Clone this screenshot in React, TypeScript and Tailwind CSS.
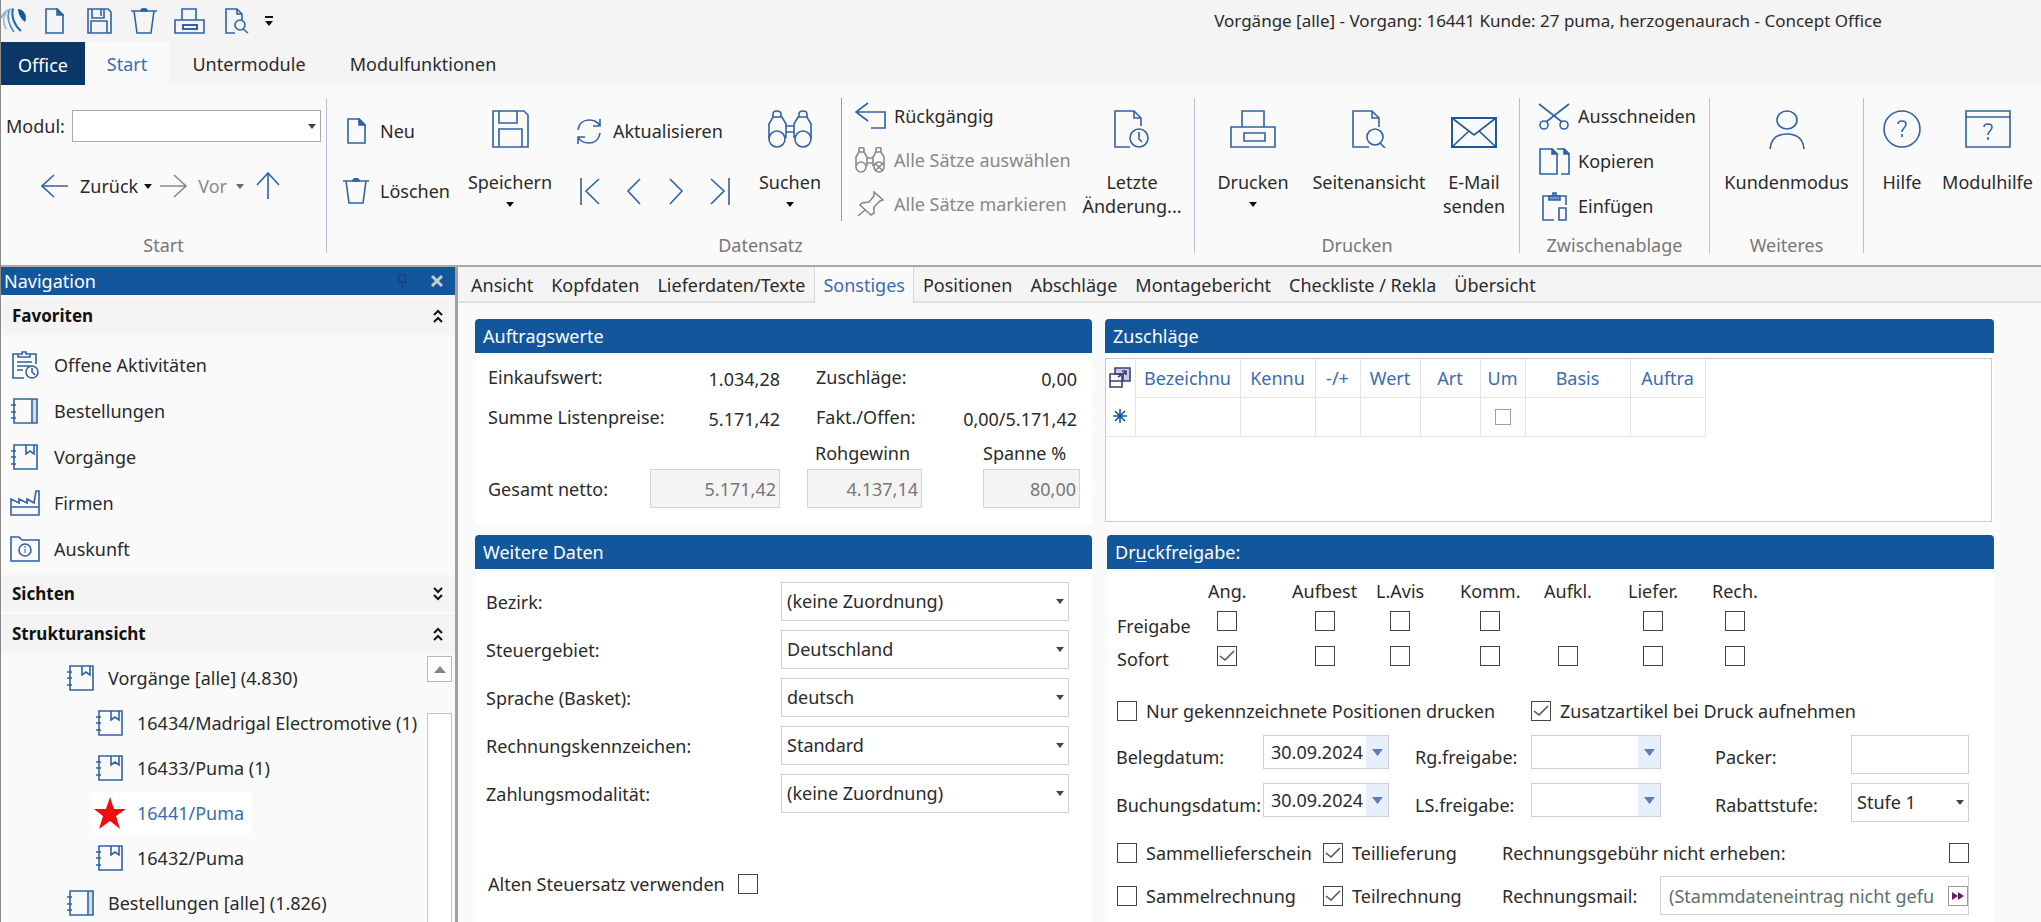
import type { ReactNode, SVGProps } from "react";

const BLUE = "#2f63a3";
const GRAY = "#8a8a8a";

type IconProps = { w: number; h: number; color?: string; children: ReactNode } & SVGProps<SVGSVGElement>;

const Icon = ({ w, h, color = BLUE, children, ...rest }: IconProps) => (
  <svg
    width={w}
    height={h}
    viewBox={`0 0 ${w} ${h}`}
    fill="none"
    stroke={color}
    strokeWidth={1.6}
    className="shrink-0"
    aria-hidden="true"
    {...rest}
  >
    {children}
  </svg>
);

/* ---------- icons ---------- */

const LogoIcon = () => (
  <svg width="27" height="28" viewBox="0 0 27 28" fill="none" className="shrink-0" aria-hidden="true">
    <path d="M0 11C3 5 7 2 13 2" stroke="#7fb0df" strokeWidth="2" />
    <path d="M5 6C2 10 2 16 5 22" stroke="#8fb9e2" strokeWidth="1.5" />
    <path d="M8 4C6 10 8 18 13 25" stroke="#4f8ccb" strokeWidth="1.7" />
    <path d="M12 2C10 9 13 18 20 24" stroke="#1f66b2" strokeWidth="2" />
    <path d="M17 2C22 2 27 8 24 15C20 12 17 7 17 2Z" fill="#15589f" />
  </svg>
);

const FileIcon = () => (
  <Icon w={19} h={26}>
    <path d="M1 1H12L18 7V25H1Z" />
    <path d="M12 1V7H18Z" fill={BLUE} />
  </Icon>
);

const SaveSmallIcon = () => (
  <Icon w={25} h={26}>
    <path d="M1 1H21L24 4V25H1Z" />
    <path d="M5 1V10H17V1M14 1V8M4 25V13H20V25" />
  </Icon>
);

const SaveIcon = () => (
  <Icon w={37} h={38}>
    <path d="M1 1H32L36 5V37H1Z" />
    <path d="M7 1V13H25V1M7 37V19H30V37" />
  </Icon>
);

const TrashIcon = () => (
  <Icon w={26} h={26}>
    <path d="M0 3H26M3 3L6 25H20L23 3" />
    <path d="M10 3C10 0 16 0 16 3Z" fill={BLUE} />
  </Icon>
);

const PrinterSmallIcon = () => (
  <Icon w={31} h={26}>
    <path d="M8 12V1H22V12M1 12H30V25H1Z" />
    <path d="M9 17H23V21H9Z" strokeWidth="2" />
  </Icon>
);

const PrinterIcon = () => (
  <Icon w={46} h={38}>
    <path d="M12 17V1H34V17M1 17H45V37H1Z" />
    <path d="M14 23H35V31H14Z" />
  </Icon>
);

const PreviewSmallIcon = () => (
  <Icon w={24} h={26}>
    <path d="M10 25H1V1H12L17 6V12M12 1V6H17" />
    <circle cx="15" cy="17" r="5" />
    <path d="M18 21L23 25" />
  </Icon>
);

const PreviewIcon = () => (
  <Icon w={34} h={38}>
    <path d="M17 37H1V1H20L27 8V17M20 1V8H27" />
    <circle cx="23" cy="27" r="8" />
    <path d="M28 33L33 38" />
  </Icon>
);

const LastChangeIcon = () => (
  <Icon w={36} h={38}>
    <path d="M16 37H1V1H20L27 8V16M20 1V8H27" />
    <circle cx="25" cy="28" r="9" />
    <path d="M25 22V29L28 32" />
  </Icon>
);

const BackIcon = () => (
  <Icon w={28} h={26}>
    <path d="M27 13H1M13 2L1 13L13 24" />
  </Icon>
);

const ForwardIcon = () => (
  <Icon w={28} h={26} color={GRAY}>
    <path d="M1 13H27M15 2L27 13L15 24" />
  </Icon>
);

const UpIcon = () => (
  <Icon w={24} h={28}>
    <path d="M12 27V1M1 13L12 1L23 13" />
  </Icon>
);

const RefreshIcon = () => (
  <Icon w={26} h={27}>
    <path d="M2 12C3 5 8 2 13 2C18 2 22 4 24 8M24 1V8H17" />
    <path d="M24 15C23 22 18 25 13 25C8 25 4 23 2 19M2 26V19H9" />
  </Icon>
);

const FirstIcon = () => (
  <Icon w={20} h={27}>
    <path d="M1 0V27M19 1L6 13L19 26" />
  </Icon>
);

const PrevIcon = () => (
  <Icon w={16} h={27}>
    <path d="M14 1L2 13L14 26" />
  </Icon>
);

const NextIcon = () => (
  <Icon w={16} h={27}>
    <path d="M2 1L14 13L2 26" />
  </Icon>
);

const LastIcon = () => (
  <Icon w={20} h={27}>
    <path d="M19 0V27M1 1L14 13L1 26" />
  </Icon>
);

const BinocularsIcon = () => (
  <Icon w={44} h={38}>
    <circle cx="9" cy="29" r="8" />
    <circle cx="35" cy="29" r="8" />
    <path d="M1 28V14L5 7H14L18 14V28M26 28V14L30 7H39L43 14V28" />
    <path d="M5 7V4C5 0 13 0 13 4V7M31 7V4C31 0 39 0 39 4V7M18 16H26M18 22H26" />
  </Icon>
);

const SelectAllIcon = () => (
  <Icon w={30} h={26} color={GRAY}>
    <circle cx="6" cy="20" r="5" />
    <circle cx="24" cy="20" r="5" />
    <path d="M1 19V10L4 5H9L12 10V19M18 19V10L21 5H26L29 10V19" />
    <path d="M4 5V2C4 0 9 0 9 2V5M21 5V2C21 0 26 0 26 2V5M12 11H18M12 16H18M20 16L28 24M28 16L20 24" />
  </Icon>
);

const PinIcon = () => (
  <Icon w={27} h={26} color={GRAY}>
    <path d="M17 1L26 9L23 10L17 16L17 22L14 24L3 14L5 12L12 11L17 5ZM8 19L1 25" />
  </Icon>
);

const UndoIcon = () => (
  <Icon w={31} h={28}>
    <path d="M13 1L1 10L13 19M1 10H30V26H16" />
  </Icon>
);

const MailIcon = () => (
  <Icon w={46} h={38} color="#1f5a96">
    <path d="M1 8H45V37H1Z" strokeWidth="2" />
    <path d="M1 8L23 25L45 8M1 37L18 21M45 37L28 21" />
  </Icon>
);

const CutIcon = () => (
  <Icon w={32} h={27}>
    <path d="M1 1L24 19M31 1L8 19" />
    <circle cx="6" cy="22" r="4" />
    <circle cx="26" cy="22" r="4" />
  </Icon>
);

const CopyIcon = () => (
  <Icon w={31} h={27}>
    <path d="M1 1H13L18 6V26H1ZM18 1H25L30 6V26H22" />
    <path d="M13 1V6H18ZM25 1V6H30Z" fill={BLUE} />
  </Icon>
);

const PasteIcon = () => (
  <Icon w={27} h={29}>
    <path d="M13 28H2V4H25V13M18 16H25V28H18Z" />
    <path d="M8 4H19V8H8ZM12 1H15V4H12Z" fill="#7a93bf" />
  </Icon>
);

const PersonIcon = () => (
  <Icon w={36} h={39}>
    <ellipse cx="18" cy="10" rx="10" ry="9" />
    <path d="M1 39C2 28 9 24 18 24C27 24 34 28 35 39" />
  </Icon>
);

const HelpIcon = () => (
  <Icon w={38} h={38}>
    <circle cx="19" cy="19" r="18" />
    <path d="M15 14C15 10 23 10 23 14C23 18 19 18 19 22M19 24V27" />
  </Icon>
);

const ModuleHelpIcon = () => (
  <Icon w={46} h={38}>
    <path d="M1 1H45V37H1ZM1 7H45" />
    <path d="M19 17C19 13 27 13 27 17C27 21 23 21 23 25M23 27V30" />
  </Icon>
);

const TasksIcon = () => (
  <Icon w={30} h={30}>
    <path d="M14 28H3V4H8M20 4H26V14M8 7H20V4H16V2H12V4H8ZM7 12H22M7 16H20M7 20H13" />
    <circle cx="22" cy="22" r="6" />
    <path d="M22 18V22L25 25" />
  </Icon>
);

const OrderBookIcon = () => (
  <Icon w={30} h={28}>
    <path d="M23 2H26V26H23Z" fill="#d3ddeb" stroke="none" />
    <path d="M4 2H27V26H4ZM22 2V26M1 8H6M1 15H6M1 21H6" />
  </Icon>
);

const CaseBookIcon = () => (
  <Icon w={30} h={28}>
    <path d="M4 2H27V26H4ZM1 8H6M1 14H6M1 21H6M16 2V11L20 8L24 11V2" />
  </Icon>
);

const FactoryIcon = () => (
  <Icon w={30} h={28}>
    <path d="M1 26V10L9 14V10L17 14V10L24 14L26 2H29V26ZM1 18H29" />
  </Icon>
);

const InfoFolderIcon = () => (
  <Icon w={30} h={28}>
    <path d="M1 26V2H9L12 5H29V26Z" />
    <circle cx="15" cy="15" r="6" />
    <path d="M15 14V18M15 11V13" strokeWidth="1" />
  </Icon>
);

const StarIcon = () => (
  <svg width="32" height="32" viewBox="0 0 32 32" className="shrink-0" aria-hidden="true">
    <path d="M16 0L20 12H32L22 19L26 32L16 24L5 32L9 19L0 12H12Z" fill="#f20d0d" />
  </svg>
);

const GridIcon = () => (
  <Icon w={22} h={22} color="#3d3f78">
    <path d="M6 1H21V14H14V7H6Z" fill="#c9c9e6" />
    <path d="M1 7H13V20H1ZM1 14H13M9 10L17 5M13 4H17V8" />
  </Icon>
);

const Caret = ({ color = "#111" }: { color?: string }) => (
  <svg width="8" height="5" viewBox="0 0 8 5" className="shrink-0" aria-hidden="true">
    <path d="M0 0H8L4 5Z" fill={color} />
  </svg>
);

const DoubleChevron = ({ down = false }: { down?: boolean }) => (
  <Icon w={10} h={14} color="#111" strokeWidth={2}>
    <path d={down ? "M1 1L5 5L9 1M1 8L5 12L9 8" : "M1 6L5 2L9 6M1 13L5 9L9 13"} />
  </Icon>
);

/* ---------- form controls ---------- */

const Checkbox = ({ id, checked, label, light }: { id?: string; checked?: boolean; label?: string; light?: boolean }) => (
  <span className={`relative block shrink-0 ${light ? "size-4" : "size-5"}`}>
    <input
      type="checkbox"
      id={id}
      aria-label={label}
      defaultChecked={checked}
      className={`peer block size-full appearance-none border bg-white ${light ? "border-gray-400" : "border-[#444]"}`}
    />
    <svg
      viewBox="0 0 20 20"
      className="pointer-events-none invisible absolute inset-0 size-full peer-checked:visible"
      fill="none"
      stroke="#555"
      strokeWidth="1.6"
      aria-hidden="true"
    >
      <path d="M3 10L8 14L17 5" />
    </svg>
  </span>
);

const CheckField = ({ id, label, checked }: { id: string; label: string; checked?: boolean }) => (
  <div className="flex items-center gap-[9px] whitespace-nowrap">
    <Checkbox id={id} checked={checked} />
    <label htmlFor={id}>{label}</label>
  </div>
);

const Select = ({ id, value, className }: { id: string; value: string; className: string }) => (
  <div className={`relative ${className}`}>
    <select id={id} className="size-full appearance-none border border-[#d0d0d0] bg-white pb-[2px] pl-[5px] pr-6">
      <option>{value}</option>
    </select>
    <span className="pointer-events-none absolute inset-y-0 right-[5px] flex items-center">
      <Caret color="#444" />
    </span>
  </div>
);

const DateField = ({ id, value, label }: { id: string; value?: string; label: string }) => (
  <div className="flex h-[34px] border border-[#ccd1da] bg-white">
    <input id={id} defaultValue={value} className="w-full min-w-0 pl-[7px] outline-none" />
    <button aria-label={`${label} Kalender`} className="flex w-[22px] shrink-0 items-center justify-center bg-[#e8effa]">
      <svg width="11" height="7" viewBox="0 0 11 7" aria-hidden="true">
        <path d="M0 0H11L5.5 7Z" fill="#5a80b8" />
      </svg>
    </button>
  </div>
);

/* ---------- ribbon ---------- */

const RibbonGroup = ({ title, className, children }: { title?: string; className: string; children: ReactNode }) => (
  <section className={`flex h-[155px] shrink-0 flex-col ${className}`}>
    <div className="flex flex-1">{children}</div>
    <h2 className="h-4 text-center leading-4 text-[#777]">{title}</h2>
  </section>
);

const BigButton = ({ icon, label, caret, className }: { icon: ReactNode; label: ReactNode; caret?: boolean; className: string }) => (
  <button className={`flex shrink-0 flex-col items-center pt-3 leading-6 ${className}`}>
    <span className="h-[60px]">{icon}</span>
    <span className="whitespace-nowrap">{label}</span>
    {caret && (
      <span className="flex h-5 items-center">
        <Caret />
      </span>
    )}
  </button>
);

const SmallButton = ({ icon, label, disabled }: { icon: ReactNode; label: string; disabled?: boolean }) => (
  <button disabled={disabled} className="flex h-9 items-center gap-2 whitespace-nowrap disabled:text-[#888]">
    <span className="flex w-8 justify-center">{icon}</span>
    {label}
  </button>
);

const Ribbon = () => (
  <div className="flex shrink-0 overflow-hidden border-b-2 border-[#a9a9a9] bg-[#fafafa] pb-3 pt-[13px]">
    <RibbonGroup title="Start" className="w-[326px] border-r border-[#b3c0d8]">
      <div className="flex flex-1 flex-col">
        <div className="flex items-center pl-[5px] pt-3">
          <label htmlFor="modul" className="w-[66px]">
            Modul:
          </label>
          <div className="relative h-8 w-[249px]">
            <select id="modul" className="size-full appearance-none border border-[#aaa] bg-white" />
            <span className="pointer-events-none absolute inset-y-0 right-[5px] flex items-center">
              <Caret color="#444" />
            </span>
          </div>
        </div>
        <div className="flex h-[88px] items-center pl-10">
          <button className="flex items-center gap-[11px]">
            <BackIcon />
            <span>Zurück</span>
          </button>
          <button aria-label="Verlauf zurück" className="w-[21px] pl-[6px]">
            <Caret />
          </button>
          <button disabled className="flex items-center gap-[11px] text-[#888]">
            <ForwardIcon />
            <span>Vor</span>
          </button>
          <button disabled aria-label="Verlauf vor" className="w-[29px] pl-[9px]">
            <Caret color="#666" />
          </button>
          <button aria-label="Nach oben">
            <UpIcon />
          </button>
        </div>
      </div>
    </RibbonGroup>

    <RibbonGroup title="Datensatz" className="w-[868px] border-r border-[#b3c0d8]">
      <div className="flex w-[122px] flex-col gap-[30px] pl-4 pt-[18px]">
        <button className="flex h-[30px] items-center gap-[11px]">
          <span className="flex w-[26px] justify-center">
            <FileIcon />
          </span>
          Neu
        </button>
        <button className="flex h-[30px] items-center gap-[11px]">
          <TrashIcon />
          Löschen
        </button>
      </div>
      <BigButton icon={<SaveIcon />} label="Speichern" caret className="ml-[15px] w-[92px]" />
      <div className="ml-5 flex w-[160px] flex-col gap-[30px] pt-[18px]">
        <button className="flex h-[30px] items-center gap-[11px]">
          <RefreshIcon />
          Aktualisieren
        </button>
        <div className="flex h-[30px] items-center justify-between pl-1 pr-[6px]">
          <button aria-label="Erster Datensatz">
            <FirstIcon />
          </button>
          <button aria-label="Vorheriger Datensatz">
            <PrevIcon />
          </button>
          <button aria-label="Nächster Datensatz">
            <NextIcon />
          </button>
          <button aria-label="Letzter Datensatz">
            <LastIcon />
          </button>
        </div>
      </div>
      <BigButton icon={<BinocularsIcon />} label="Suchen" caret className="ml-4 w-[76px]" />
      <div className="ml-[13px] flex h-[123px] flex-col gap-[9px] border-l border-[#999] pl-3">
        <SmallButton icon={<UndoIcon />} label="Rückgängig" />
        <SmallButton icon={<SelectAllIcon />} label="Alle Sätze auswählen" disabled />
        <SmallButton icon={<PinIcon />} label="Alle Sätze markieren" disabled />
      </div>
      <BigButton
        icon={<LastChangeIcon />}
        label={
          <>
            Letzte
            <br />
            Änderung...
          </>
        }
        className="ml-auto mr-2 w-[108px]"
      />
    </RibbonGroup>

    <RibbonGroup title="Drucken" className="w-[325px] border-r border-[#b3c0d8]">
      <BigButton icon={<PrinterIcon />} label="Drucken" caret className="ml-[14px] w-[88px]" />
      <BigButton icon={<PreviewIcon />} label="Seitenansicht" className="ml-2 w-[128px]" />
      <BigButton
        icon={<MailIcon />}
        label={
          <>
            E-Mail
            <br />
            senden
          </>
        }
        className="w-[82px]"
      />
    </RibbonGroup>

    <RibbonGroup title="Zwischenablage" className="w-[190px] border-r border-[#b3c0d8]">
      <div className="flex flex-col gap-[9px] pl-[18px]">
        <SmallButton icon={<CutIcon />} label="Ausschneiden" />
        <SmallButton icon={<CopyIcon />} label="Kopieren" />
        <SmallButton icon={<PasteIcon />} label="Einfügen" />
      </div>
    </RibbonGroup>

    <RibbonGroup title="Weiteres" className="w-[154px] border-r border-[#b3c0d8]">
      <BigButton icon={<PersonIcon />} label="Kundenmodus" className="w-full" />
    </RibbonGroup>

    <RibbonGroup className="flex-1">
      <BigButton icon={<HelpIcon />} label="Hilfe" className="w-[76px]" />
      <BigButton icon={<ModuleHelpIcon />} label="Modulhilfe" className="w-[95px]" />
    </RibbonGroup>
  </div>
);

const TitleBar = () => (
  <header className="shrink-0 bg-[#f4f4f4]">
    <div className="flex h-[42px] items-center">
      <div className="flex items-center">
        <span className="w-[44px]">
          <LogoIcon />
        </span>
        <button aria-label="Neu" className="w-[42px]">
          <FileIcon />
        </button>
        <button aria-label="Speichern" className="w-[44px]">
          <SaveSmallIcon />
        </button>
        <button aria-label="Löschen" className="w-[43px]">
          <TrashIcon />
        </button>
        <button aria-label="Drucken" className="w-[51px]">
          <PrinterSmallIcon />
        </button>
        <button aria-label="Seitenansicht" className="w-[40px]">
          <PreviewSmallIcon />
        </button>
        <button aria-label="Symbolleiste anpassen" className="border-t-2 border-[#111] pt-[3px]">
          <Caret />
        </button>
      </div>
      <h1 className="ml-auto w-[986px] text-center text-[17px]">
        Vorgänge [alle] - Vorgang: 16441 Kunde: 27 puma, herzogenaurach - Concept Office
      </h1>
    </div>
    <nav className="flex h-[43px]">
      <button className="h-[46px] w-[84px] bg-[#0b3768] text-white">Office</button>
      <button className="w-[84px] bg-[#fafafa] text-[#3a6cb0]">Start</button>
      <button className="ml-3 w-[136px]">Untermodule</button>
      <button className="ml-4 w-[180px]">Modulfunktionen</button>
    </nav>
  </header>
);

/* ---------- navigation ---------- */

const favorites = [
  { label: "Offene Aktivitäten", icon: <TasksIcon /> },
  { label: "Bestellungen", icon: <OrderBookIcon /> },
  { label: "Vorgänge", icon: <CaseBookIcon /> },
  { label: "Firmen", icon: <FactoryIcon /> },
  { label: "Auskunft", icon: <InfoFolderIcon /> },
];

const tree = [
  { label: "Vorgänge [alle] (4.830)", icon: <CaseBookIcon />, level: 0 },
  { label: "16434/Madrigal Electromotive (1)", icon: <CaseBookIcon />, level: 1 },
  { label: "16433/Puma (1)", icon: <CaseBookIcon />, level: 1 },
  { label: "16441/Puma", icon: <StarIcon />, level: 1, active: true },
  { label: "16432/Puma", icon: <CaseBookIcon />, level: 1 },
  { label: "Bestellungen [alle] (1.826)", icon: <OrderBookIcon />, level: 0 },
];

const NavHeading = ({ title, down, className }: { title: string; down?: boolean; className: string }) => (
  <button className={`flex w-full shrink-0 items-center justify-between bg-[#f4f4f4] pl-[11px] pr-3 text-[17px] font-bold text-[#111] ${className}`}>
    {title}
    <DoubleChevron down={down} />
  </button>
);

const Sidebar = () => (
  <aside className="flex w-[457px] shrink-0 flex-col overflow-hidden border-r-[3px] border-[#a0a0a0]">
    <div className="flex h-7 shrink-0 items-center bg-[#12569c] pl-[3px] pr-3 text-white">
      <span className="flex-1">Navigation</span>
      <button aria-label="Anheften" className="mr-6">
        <Icon w={10} h={14} color="#1c3f86">
          <path d="M2 1H8V8H2ZM0 8H10M5 8V14" />
        </Icon>
      </button>
      <button aria-label="Schließen">
        <Icon w={12} h={12} color="#c9c9c9" strokeWidth={3}>
          <path d="M1 1L11 11M11 1L1 11" />
        </Icon>
      </button>
    </div>
    <NavHeading title="Favoriten" className="mt-[2px] h-[38px]" />
    <ul className="h-[240px] shrink-0 pt-[7px]">
      {favorites.map((f) => (
        <li key={f.label}>
          <button className="flex h-[46px] items-center gap-[14px] pl-[9px]">
            {f.icon}
            {f.label}
          </button>
        </li>
      ))}
    </ul>
    <NavHeading title="Sichten" down className="h-[37px]" />
    <NavHeading title="Strukturansicht" className="mt-[2px] h-[39px]" />
    <div className="flex min-h-0 flex-1 justify-between">
      <ul className="min-w-0 flex-1 overflow-hidden pt-[2px]">
        {tree.map((t) => (
          <li key={t.label} className={`flex h-[45px] items-center ${t.level ? "pl-[91px]" : "pl-[62px]"}`}>
            <button
              className={`flex h-[42px] items-center whitespace-nowrap ${
                t.active ? "bg-white pr-2 text-[#3a6cb0]" : ""
              }`}
            >
              <span className="mr-[9px] flex w-9 justify-center">{t.icon}</span>
              {t.label}
            </button>
          </li>
        ))}
      </ul>
      <div className="mr-[3px] flex w-[25px] shrink-0 flex-col pt-[3px]">
        <button aria-label="Nach oben blättern" className="flex h-[26px] shrink-0 items-center justify-center border border-[#b8b8b8] bg-white">
          <svg width="12" height="7" viewBox="0 0 12 7" aria-hidden="true">
            <path d="M0 7H12L6 0Z" fill="#888" />
          </svg>
        </button>
        <div className="mt-[31px] flex-1 border border-b-0 border-[#c4c4c4] bg-white" />
      </div>
    </div>
  </aside>
);

/* ---------- main area ---------- */

const tabs = [
  "Ansicht",
  "Kopfdaten",
  "Lieferdaten/Texte",
  "Sonstiges",
  "Positionen",
  "Abschläge",
  "Montagebericht",
  "Checkliste / Rekla",
  "Übersicht",
];

const TabBar = () => (
  <div role="tablist" className="flex h-9 shrink-0 border-b-2 border-[#e0e0e0] bg-[#f4f4f4] pl-1">
    {tabs.map((tab) => (
      <button
        key={tab}
        role="tab"
        aria-selected={tab === "Sonstiges"}
        className="h-9 whitespace-nowrap border-x border-transparent px-2 aria-selected:border-[#d8d8d8] aria-selected:bg-[#fafafa] aria-selected:text-[#3a6cb0]"
      >
        {tab}
      </button>
    ))}
  </div>
);

const Panel = ({ title, className, children }: { title: ReactNode; className?: string; children: ReactNode }) => (
  <section className={`bg-white ${className ?? ""}`}>
    <h2 className="flex h-[34px] shrink-0 items-center rounded-t bg-[#12569c] px-2 text-white">{title}</h2>
    {children}
  </section>
);

const readOnlyClass = "h-[39px] border border-[#d4d4d4] bg-[#f4f4f4] pr-[3px] text-right text-[#777]";

const OrderValues = () => (
  <Panel title="Auftragswerte" className="h-[205px]">
    <dl className="grid grid-cols-[162px_130px_35px_115px_33px_125px] pl-[13px] pt-1">
      <dt className="h-10 leading-10">Einkaufswert:</dt>
      <dd className="pt-1 text-right leading-9">1.034,28</dd>
      <dt className="col-span-2 pl-9 leading-10">Zuschläge:</dt>
      <dd className="col-span-2 pr-[11px] pt-1 text-right leading-9">0,00</dd>
      <dt className="h-10 whitespace-nowrap leading-10">Summe Listenpreise:</dt>
      <dd className="pt-1 text-right leading-9">5.171,42</dd>
      <dt className="col-span-2 pl-9 leading-10">Fakt./Offen:</dt>
      <dd className="col-span-2 pr-[11px] pt-1 text-right leading-9">0,00/5.171,42</dd>
    </dl>
    <div className="grid grid-cols-[162px_130px_27px_115px_61px_97px] items-center pl-[13px]">
      <label htmlFor="rohgewinn" className="col-start-4 h-8 pl-2 leading-8">
        Rohgewinn
      </label>
      <label htmlFor="spanne" className="col-start-6 h-8 whitespace-nowrap leading-8">
        Spanne %
      </label>
      <label htmlFor="gesamt">Gesamt netto:</label>
      <input id="gesamt" readOnly value="5.171,42" className={readOnlyClass} />
      <input id="rohgewinn" readOnly value="4.137,14" className={`col-start-4 ${readOnlyClass}`} />
      <input id="spanne" readOnly value="80,00" className={`col-start-6 ${readOnlyClass}`} />
    </div>
  </Panel>
);

const columns = [
  { label: "Bezeichnu", width: "w-[105px]" },
  { label: "Kennu", width: "w-[75px]" },
  { label: "-/+", width: "w-[45px]" },
  { label: "Wert", width: "w-[60px]" },
  { label: "Art", width: "w-[60px]" },
  { label: "Um", width: "w-[45px]" },
  { label: "Basis", width: "w-[105px]" },
  { label: "Auftra", width: "w-[75px]" },
];

const Surcharges = () => (
  <Panel title="Zuschläge" className="flex h-[205px] flex-col">
    <div className="mb-[2px] mr-[2px] mt-[5px] flex-1 border border-[#c9c9dc] bg-white">
      <table className="table-fixed border-collapse">
        <thead>
          <tr className="h-[38px] text-[#3a6cb0]">
            <th className="w-[29px]">
              <span className="flex justify-center">
                <GridIcon />
              </span>
            </th>
            {columns.map((c) => (
              <th key={c.label} className={`border-x border-b border-[#e4e4e4] font-normal ${c.width}`}>
                {c.label}
              </th>
            ))}
          </tr>
        </thead>
        <tbody>
          <tr className="h-[39px]">
            <td className="border-b border-[#e4e4e4]">
              <span className="flex justify-center">
                <Icon w={14} h={14} color="#12569c">
                  <path d="M7 0V14M0 7H14M2 2L12 12M12 2L2 12" />
                </Icon>
              </span>
            </td>
            {columns.map((c) => (
              <td key={c.label} className="border border-[#e4e4e4]">
                {c.label === "Um" && (
                  <span className="flex justify-center">
                    <Checkbox label="Um" light />
                  </span>
                )}
              </td>
            ))}
          </tr>
        </tbody>
      </table>
    </div>
  </Panel>
);

const furtherData = [
  { id: "bezirk", label: "Bezirk:", value: "(keine Zuordnung)" },
  { id: "steuergebiet", label: "Steuergebiet:", value: "Deutschland" },
  { id: "sprache", label: "Sprache (Basket):", value: "deutsch" },
  { id: "kennzeichen", label: "Rechnungskennzeichen:", value: "Standard" },
  { id: "modalitaet", label: "Zahlungsmodalität:", value: "(keine Zuordnung)" },
];

const FurtherData = () => (
  <Panel title="Weitere Daten">
    <div className="flex flex-col gap-[9px] pl-[11px] pr-[23px] pt-[13px]">
      {furtherData.map((f) => (
        <div key={f.id} className="flex items-center justify-between">
          <label htmlFor={f.id}>{f.label}</label>
          <Select id={f.id} value={f.value} className="h-[39px] w-[288px]" />
        </div>
      ))}
    </div>
    <div className="flex items-center gap-[13px] pl-[13px] pt-[59px]">
      <label htmlFor="alter-satz">Alten Steuersatz verwenden</label>
      <Checkbox id="alter-satz" />
    </div>
  </Panel>
);

const releases = [
  { label: "Ang.", release: true, instant: true },
  { label: "Aufbest", release: true },
  { label: "L.Avis", release: true },
  { label: "Komm.", release: true },
  { label: "Aufkl.", release: false },
  { label: "Liefer.", release: true },
  { label: "Rech.", release: true },
];

const PrintRelease = () => (
  <Panel
    title={
      <span>
        Dr<u className="underline-offset-2">u</u>ckfreigabe:
      </span>
    }
    className="ml-[2px]"
  >
    <div className="flex pl-[10px] pt-[10px]">
      <div className="w-[91px] shrink-0 pt-[30px]">
        <div className="h-[35px] leading-[35px]">Freigabe</div>
        <div className="h-[30px] leading-[30px]">Sofort</div>
      </div>
      {releases.map((r) => (
        <div key={r.label} className="w-[84px] shrink-0">
          <div className="flex w-fit flex-col items-center">
            <span className="h-6 whitespace-nowrap leading-6">{r.label}</span>
            <span className="flex h-[35px] items-center">
              {r.release && <Checkbox label={`Freigabe ${r.label}`} />}
            </span>
            <span className="flex h-[35px] items-center">
              <Checkbox label={`Sofort ${r.label}`} checked={r.instant} />
            </span>
          </div>
        </div>
      ))}
    </div>

    <div className="grid grid-cols-[414px_1fr] pl-[10px] pt-[25px]">
      <CheckField id="nur-gek" label="Nur gekennzeichnete Positionen drucken" />
      <CheckField id="zusatz" label="Zusatzartikel bei Druck aufnehmen" checked />
    </div>

    <div className="grid grid-cols-[147px_126px_26px_116px_130px_54px_1fr_118px] gap-y-[9px] pl-[9px] pr-[25px] pt-3">
      <label htmlFor="belegdatum" className="h-[39px] leading-[44px]">
        Belegdatum:
      </label>
      <DateField id="belegdatum" value="30.09.2024" label="Belegdatum" />
      <label htmlFor="rg-freigabe" className="col-start-4 h-[39px] leading-[44px]">
        Rg.freigabe:
      </label>
      <DateField id="rg-freigabe" label="Rg.freigabe" />
      <label htmlFor="packer" className="col-start-7 h-[39px] leading-[44px]">
        Packer:
      </label>
      <input id="packer" className="h-[39px] border border-[#d0d0d0] bg-white px-[5px]" />

      <label htmlFor="buchungsdatum" className="h-[39px] whitespace-nowrap leading-[44px]">
        Buchungsdatum:
      </label>
      <DateField id="buchungsdatum" value="30.09.2024" label="Buchungsdatum" />
      <label htmlFor="ls-freigabe" className="col-start-4 h-[39px] leading-[44px]">
        LS.freigabe:
      </label>
      <DateField id="ls-freigabe" label="LS.freigabe" />
      <label htmlFor="rabattstufe" className="col-start-7 h-[39px] leading-[44px]">
        Rabattstufe:
      </label>
      <Select id="rabattstufe" value="Stufe 1" className="h-[39px] w-[118px]" />
    </div>

    <div className="grid grid-cols-[206px_179px_158px_1fr] items-center pl-[10px] pr-[25px] pt-2">
      <CheckField id="sammellieferschein" label="Sammellieferschein" />
      <CheckField id="teillieferung" label="Teillieferung" checked />
      <div className="col-span-2 flex h-[46px] items-center justify-between">
        <label htmlFor="gebuehr">Rechnungsgebühr nicht erheben:</label>
        <Checkbox id="gebuehr" />
      </div>
      <CheckField id="sammelrechnung" label="Sammelrechnung" />
      <CheckField id="teilrechnung" label="Teilrechnung" checked />
      <label htmlFor="rechnungsmail">Rechnungsmail:</label>
      <div className="flex h-[39px] items-center border border-[#d0d0d0] bg-white">
        <input
          id="rechnungsmail"
          defaultValue="(Stammdateneintrag nicht gefu"
          className="w-full min-w-0 pl-2 text-[#5c6f6f] outline-none"
        />
        <button aria-label="Rechnungsmail öffnen" className="flex size-5 shrink-0 items-center justify-center border border-[#999]">
          <svg width="12" height="8" viewBox="0 0 12 8" aria-hidden="true">
            <path d="M0 0L6 4L0 8ZM6 0L12 4L6 8Z" fill="#6b1f6b" />
          </svg>
        </button>
      </div>
    </div>
  </Panel>
);

export default function App() {
  return (
    <div className="flex h-screen flex-col overflow-hidden border-l border-[#8a8a8a] bg-[#fafafa] font-['Noto_Sans','Open_Sans',sans-serif] text-[18px] leading-6 text-[#2b2b2b]">
      <TitleBar />
      <Ribbon />
      <div className="flex min-h-0 flex-1">
        <Sidebar />
        <main className="flex min-w-0 flex-1 flex-col">
          <TabBar />
          <div className="grid flex-1 grid-cols-[617fr_889fr] grid-rows-[auto_1fr] gap-x-[13px] gap-y-[11px] pl-[17px] pr-[47px] pt-4">
            <OrderValues />
            <Surcharges />
            <FurtherData />
            <PrintRelease />
          </div>
        </main>
      </div>
    </div>
  );
}
